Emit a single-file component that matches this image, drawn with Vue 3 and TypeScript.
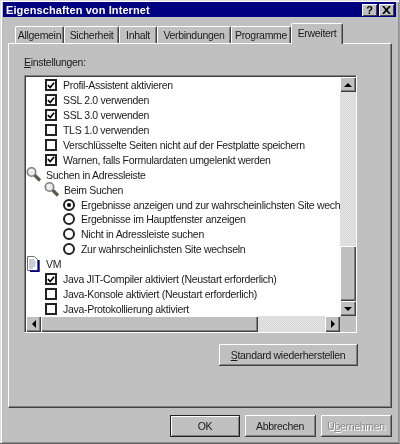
<script setup lang="ts">
interface Tab { label: string; width: number; active?: boolean }
interface Row { kind: 'check' | 'radio' | 'search' | 'doc'; level: number; text: string; on?: boolean }

const tabs: Tab[] = [
  { label: 'Allgemein', width: 49 },
  { label: 'Sicherheit', width: 55 },
  { label: 'Inhalt', width: 38 },
  { label: 'Verbindungen', width: 74 },
  { label: 'Programme', width: 60 },
  { label: 'Erweitert', width: 52, active: true },
]

const rows: Row[] = [
  { kind: 'check', level: 1, text: 'Profil-Assistent aktivieren', on: true },
  { kind: 'check', level: 1, text: 'SSL 2.0 verwenden', on: true },
  { kind: 'check', level: 1, text: 'SSL 3.0 verwenden', on: true },
  { kind: 'check', level: 1, text: 'TLS 1.0 verwenden' },
  { kind: 'check', level: 1, text: 'Verschlüsselte Seiten nicht auf der Festplatte speichern' },
  { kind: 'check', level: 1, text: 'Warnen, falls Formulardaten umgelenkt werden', on: true },
  { kind: 'search', level: 0, text: 'Suchen in Adressleiste' },
  { kind: 'search', level: 1, text: 'Beim Suchen' },
  { kind: 'radio', level: 2, text: 'Ergebnisse anzeigen und zur wahrscheinlichsten Site wechseln', on: true },
  { kind: 'radio', level: 2, text: 'Ergebnisse im Hauptfenster anzeigen' },
  { kind: 'radio', level: 2, text: 'Nicht in Adressleiste suchen' },
  { kind: 'radio', level: 2, text: 'Zur wahrscheinlichsten Site wechseln' },
  { kind: 'doc', level: 0, text: 'VM' },
  { kind: 'check', level: 1, text: 'Java JIT-Compiler aktiviert (Neustart erforderlich)', on: true },
  { kind: 'check', level: 1, text: 'Java-Konsole aktiviert (Neustart erforderlich)' },
  { kind: 'check', level: 1, text: 'Java-Protokollierung aktiviert' },
]
</script>

<template>
  <div class="window">
    <div class="titlebar">
      <span class="title">Eigenschaften von Internet</span>
      <div class="caption-buttons">
        <button class="cap help">?</button>
        <button class="cap close">
          <svg width="9" height="8" viewBox="0 0 9 8"><path d="M1 0l7 8M8 0L1 8" fill="none" stroke="#000" stroke-width="1.7"/></svg>
        </button>
      </div>
    </div>

    <div class="tabs">
      <div
        v-for="t in tabs"
        :key="t.label"
        class="tab"
        :class="{ active: t.active }"
        :style="{ width: t.width + 'px' }"
      >{{ t.label }}</div>
    </div>

    <div class="panel">
      <div class="label"><u>E</u>instellungen:</div>

      <div class="listbox">
        <div class="rows">
          <div v-for="r in rows" :key="r.text" class="row" :class="'lv' + r.level + ' k-' + r.kind">
            <span v-if="r.kind === 'check'" class="check">
              <svg v-if="r.on" width="9" height="9" viewBox="0 0 9 9"><path d="M1 4l2.6 2.8L8 1.4" fill="none" stroke="#000" stroke-width="1.9"/></svg>
            </span>
            <span v-else-if="r.kind === 'radio'" class="radio"><i v-if="r.on" class="dot"></i></span>
            <svg v-else-if="r.kind === 'search'" class="ico" width="16" height="15" viewBox="0 0 16 15">
              <path d="M8.5 8l5.5 5.5" stroke="#5a5a48" stroke-width="3.2" fill="none"/>
              <circle cx="5.5" cy="5" r="4.2" fill="#e6edf0" stroke="#808080" stroke-width="1.6"/>
              <path d="M3.5 5a2 2 0 0 1 2-2" stroke="#fff" fill="none"/>
            </svg>
            <svg v-else class="ico doc" width="15" height="16" viewBox="0 0 15 16">
              <path d="M1.5 .5h7l3 3v11h-10z" fill="#fff" stroke="#707070"/>
              <path d="M3 4h5M3 6h6.5M3 8h6.5M3 10h6.5M3 12h4" stroke="#8f9ab0"/>
              <path d="M12.8 4v11.2H4" stroke="#000080" stroke-width="1.8" fill="none"/>
            </svg>
            <span class="txt">{{ r.text }}</span>
          </div>
        </div>

        <div class="vbar">
          <div class="sb-btn"><i class="arr up"></i></div>
          <div class="track"></div>
          <div class="thumb v"></div>
          <div class="sb-btn"><i class="arr down"></i></div>
        </div>
        <div class="hbar">
          <div class="sb-btn"><i class="arr left"></i></div>
          <div class="thumb h"></div>
          <div class="track"></div>
          <div class="sb-btn"><i class="arr right"></i></div>
        </div>
        <div class="corner"></div>
      </div>

      <div class="panel-actions">
        <button class="btn std"><u>S</u>tandard wiederherstellen</button>
      </div>
    </div>

    <div class="footer">
      <button class="btn ok">OK</button>
      <button class="btn wide">Abbrechen</button>
      <button class="btn wide disabled">Ü<u>b</u>ernehmen</button>
    </div>
  </div>
</template>

<style>
html, body { margin: 0; background: #c0c0c0; }
</style>

<style scoped>
.window {
  width: 400px;
  height: 444px;
  box-sizing: border-box;
  padding: 2px 3px 0 3px;
  display: flex;
  flex-direction: column;
  background: #c0c0c0;
  border-right: 1px solid #a0a0a0;
  border-bottom: 1px solid #606060;
  box-shadow: inset 1px 1px 0 #dfdfdf, inset 2px 2px 0 #fff, inset -1px -1px 0 #909090;
  font-family: "Liberation Sans", Arial, sans-serif;
  font-size: 10.5px;
  letter-spacing: -0.3px;
  color: #1a1a1a;
  filter: blur(0.4px);
  overflow: hidden;
}
.titlebar {
  height: 15px;
  flex: none;
  background: #000080;
  display: flex;
  align-items: center;
  justify-content: space-between;
  padding: 0 2px 0 3px;
}
.title { color: #fff; font-weight: bold; font-size: 11px; letter-spacing: 0.1px; }
.caption-buttons { display: flex; gap: 2px; }
.cap {
  width: 15px;
  height: 12px;
  padding: 0;
  margin: 0;
  background: #c0c0c0;
  border: 0;
  box-shadow: inset 1px 1px 0 #fff, inset -1px -1px 0 #404040;
  display: flex;
  align-items: center;
  justify-content: center;
  font: bold 11px "Liberation Sans", sans-serif;
  color: #000;
}
.tabs {
  flex: none;
  display: flex;
  align-items: flex-end;
  height: 26px;
  padding-left: 12px;
  position: relative;
  z-index: 1;
}
.tab {
  box-sizing: border-box;
  height: 17px;
  display: flex;
  align-items: center;
  justify-content: center;
  border-top: 1px solid #fff;
  border-left: 1px solid #fff;
  border-right: 1px solid #404040;
  border-radius: 2px 2px 0 0;
  box-shadow: inset -1px 0 0 #808080;
  white-space: nowrap;
}
.tab.active {
  height: 21px;
  margin-bottom: -1px;
  padding-bottom: 3px;
  background: #c0c0c0;
}
.panel {
  flex: none;
  box-sizing: border-box;
  margin: 0 5px;
  width: 384px;
  height: 365px;
  padding: 10px 0 0 15px;
  border-top: 1px solid #fff;
  border-left: 1px solid #fff;
  border-right: 1px solid #404040;
  border-bottom: 1px solid #404040;
  box-shadow: inset -1px -1px 0 #808080;
  display: flex;
  flex-direction: column;
}
.label { height: 21px; line-height: 17px; }
.listbox {
  box-sizing: border-box;
  width: 333px;
  height: 258px;
  flex: none;
  display: grid;
  grid-template-columns: 1fr 16px;
  grid-template-rows: 1fr 16px;
  background: #fff;
  border-top: 1px solid #808080;
  border-left: 1px solid #808080;
  border-right: 1px solid #fff;
  border-bottom: 1px solid #fff;
  box-shadow: inset 1px 1px 0 #404040;
  padding: 1px 0 0 1px;
}
.rows { overflow: hidden; min-width: 0; padding-top: 1px; }
.row {
  height: 14.9px;
  display: flex;
  align-items: center;
  white-space: nowrap;
}
.lv0 { padding-left: 0; }
.lv1 { padding-left: 18px; }
.lv2 { padding-left: 37px; }
.check {
  box-sizing: border-box;
  width: 12px;
  height: 12px;
  margin-right: 6px;
  flex: none;
  background: #fff;
  border: 2px solid #222;
  display: flex;
  align-items: center;
  justify-content: center;
}
.lv1.k-check { padding-left: 19px; }
.radio {
  box-sizing: border-box;
  width: 12px;
  height: 12px;
  margin-right: 6px;
  flex: none;
  border: 2px solid #222;
  border-radius: 50%;
  display: flex;
  align-items: center;
  justify-content: center;
}
.dot { width: 4px; height: 4px; border-radius: 50%; background: #000; }
.ico { flex: none; margin-right: 4px; }
.doc { margin-right: 5px; }
.vbar { display: flex; flex-direction: column; min-height: 0; }
.hbar { display: flex; }
.sb-btn {
  box-sizing: border-box;
  width: 15px;
  height: 15px;
  flex: none;
  background: #c0c0c0;
  box-shadow: inset 1px 1px 0 #fff, inset -1px -1px 0 #404040, inset -2px -2px 0 #808080;
  display: flex;
  align-items: center;
  justify-content: center;
}
.vbar .sb-btn, .vbar .thumb { width: 16px; }
.track {
  flex: 1;
  background: repeating-conic-gradient(#e6e6e6 0 25%, #d6d6d6 0 50%) 0 0 / 2px 2px;
}
.thumb {
  box-sizing: border-box;
  flex: none;
  background: #c0c0c0;
  box-shadow: inset 1px 1px 0 #fff, inset -1px -1px 0 #404040, inset -2px -2px 0 #808080;
}
.thumb.v { height: 55px; }
.thumb.h { width: 217px; }
.hbar .sb-btn, .hbar .thumb { height: 16px; }
.corner { background: #c0c0c0; }
.arr { width: 0; height: 0; display: block; border-style: solid; border-color: transparent; }
.arr.up { border-width: 0 4px 4px; border-bottom-color: #000; }
.arr.down { border-width: 4px 4px 0; border-top-color: #000; }
.arr.left { border-width: 4px 4px 4px 0; border-right-color: #000; }
.arr.right { border-width: 4px 0 4px 4px; border-left-color: #000; }
.panel-actions {
  display: flex;
  justify-content: flex-end;
  width: 334px;
  margin-top: 11px;
}
.btn {
  box-sizing: border-box;
  height: 22px;
  padding: 0;
  margin: 0;
  background: #c0c0c0;
  border: 0;
  border-right: 1px solid #404040;
  border-bottom: 1px solid #404040;
  box-shadow: inset 1px 1px 0 #fff, inset -1px -1px 0 #808080;
  font: 10.5px "Liberation Sans", Arial, sans-serif;
  letter-spacing: -0.3px;
  color: #1a1a1a;
}
.std { width: 139px; }
.footer {
  flex: none;
  display: flex;
  justify-content: flex-end;
  gap: 5px;
  padding: 7px 4px 0 0;
}
.ok { width: 70px; outline: 1px solid #222; outline-offset: -1px; box-shadow: inset 2px 2px 0 #fff, inset -2px -2px 0 #808080; border: 0; }
.wide { width: 71px; }
.disabled { color: #8a8a8a; text-shadow: 1px 1px 0 #fff; }
</style>
